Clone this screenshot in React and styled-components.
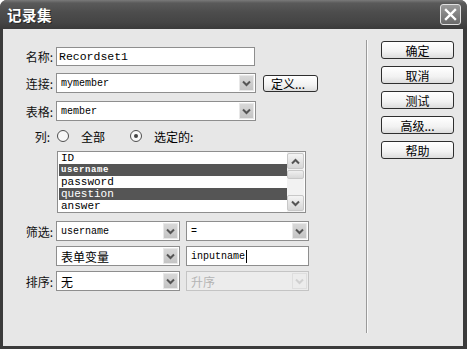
import React from "react";
import styled, { createGlobalStyle } from "styled-components";

const GlobalStyle = createGlobalStyle`
  html, body {
    margin: 0;
    padding: 0;
    background: #ffffff;
    overflow: hidden;
  }
  body {
    font-family: "Noto Sans CJK SC", "Liberation Sans", sans-serif;
    font-size: 12px;
    color: #000;
  }
`;

const cjk = `"Noto Sans CJK SC", "Liberation Sans", sans-serif`;
const mono = `"Liberation Mono", "Noto Sans CJK SC", monospace`;

const Window = styled.div`
  width: 467px;
  height: 349px;
  display: flex;
  flex-direction: column;
  border-radius: 7px 7px 0 0;
  overflow: hidden;
  background: #3b3b3b;
`;

const TitleBar = styled.div`
  height: 29px;
  flex: none;
  display: flex;
  align-items: center;
  justify-content: space-between;
  padding: 0 6px 0 7px;
  background: linear-gradient(
    to bottom,
    #7a7a7a 0px,
    #5a5a5a 3px,
    #4d4d4d 12px,
    #454545 22px,
    #3a3a3a 29px
  );
`;

const Title = styled.div`
  color: #fff;
  font-family: ${cjk};
  font-weight: 700;
  font-size: 14.5px;
  letter-spacing: 0.5px;
  text-shadow: 1px 1px 0 #222;
`;

const CloseButton = styled.div`
  width: 19px;
  height: 19px;
  border: 1px solid #e0e0e0;
  border-radius: 3px;
  background: linear-gradient(to bottom, #9a9a9a, #6a6a6a);
  display: flex;
  align-items: center;
  justify-content: center;
`;

const Frame = styled.div`
  flex: 1;
  display: flex;
  padding: 0 4px 3px 3px;
`;

const Body = styled.div`
  flex: 1;
  display: flex;
  background: #e7e7e7;
`;

const Form = styled.div`
  width: 363px;
  display: flex;
  flex-direction: column;
`;

const Row = styled.div`
  display: flex;
  align-items: center;
  height: ${(p) => p.$h}px;
  margin-top: ${(p) => p.$top}px;
`;

const Label = styled.div`
  width: ${(p) => (p.$w ? p.$w : 50)}px;
  padding-right: ${(p) => (p.$pr !== undefined ? p.$pr : 3)}px;
  text-align: right;
  font-family: ${cjk};
  font-size: 12px;
  color: #111;
  flex: none;
`;

const TextInput = styled.div`
  box-sizing: border-box;
  width: ${(p) => p.$w}px;
  height: 100%;
  background: #fff;
  border: 1px solid #8e8e8e;
  display: flex;
  align-items: center;
  padding-left: ${(p) => (p.$big ? 2 : 4)}px;
  font-family: ${mono};
  font-size: ${(p) => (p.$big ? 11.5 : 10)}px;
  color: #000;
  margin-left: ${(p) => p.$ml || 0}px;
`;

const Caret = styled.span`
  display: inline-block;
  width: 1px;
  height: 13px;
  background: #000;
  margin-left: 1px;
`;

const SelectBox = styled.div`
  box-sizing: border-box;
  width: ${(p) => p.$w}px;
  height: 100%;
  margin-left: ${(p) => p.$ml || 0}px;
  background: ${(p) => (p.$disabled ? "#ececec" : "#fff")};
  border: 1px solid ${(p) => (p.$disabled ? "#c4c4c4" : "#8e8e8e")};
  display: flex;
  align-items: center;
  padding: 1px;
`;

const SelectValue = styled.div`
  flex: 1;
  padding-left: 3px;
  font-family: ${(p) => (p.$cjk ? cjk : mono)};
  font-size: ${(p) => (p.$cjk ? 12 : 10)}px;
  color: ${(p) => (p.$disabled ? "#b4b4b4" : "#000")};
  white-space: nowrap;
`;

const ArrowButton = styled.div`
  box-sizing: border-box;
  width: 15px;
  height: 100%;
  background: ${(p) =>
    p.$disabled ? "#ececec" : "linear-gradient(to bottom, #d8d8d8, #c4c4c4)"};
  border: 1px solid ${(p) => (p.$disabled ? "#dedede" : "#e8e8e8")};
  display: flex;
  align-items: center;
  justify-content: center;
`;

const PushButton = styled.div`
  box-sizing: border-box;
  width: ${(p) => p.$w}px;
  height: ${(p) => p.$h}px;
  margin-left: ${(p) => p.$ml || 0}px;
  border: 1px solid #2e2e2e;
  border-radius: 3px;
  background: linear-gradient(to bottom, #ffffff, #f2f2f2 60%, #dcdcdc);
  display: flex;
  align-items: center;
  justify-content: ${(p) => (p.$left ? "flex-start" : "center")};
  padding-left: ${(p) => (p.$left ? 7 : 0)}px;
  font-family: ${cjk};
  font-size: 12px;
  color: #000;
  flex: none;
`;

const RadioWrap = styled.div`
  display: flex;
  align-items: center;
  margin-left: ${(p) => p.$ml || 0}px;
  gap: ${(p) => p.$gap}px;
  font-family: ${cjk};
  font-size: 12px;
`;

const RadioCircle = styled.div`
  box-sizing: border-box;
  width: 12px;
  height: 12px;
  border-radius: 50%;
  border: 1px solid #4e4e4e;
  background: #f8f8f8;
  display: flex;
  align-items: center;
  justify-content: center;
  &::after {
    content: "";
    display: ${(p) => (p.$on ? "block" : "none")};
    width: 4px;
    height: 4px;
    border-radius: 50%;
    background: #444;
  }
`;

const ListBox = styled.div`
  box-sizing: border-box;
  width: 249px;
  height: 100%;
  margin-left: 1px;
  background: #fff;
  border: 1px solid #8e8e8e;
  display: flex;
  padding: 0 1px 0 1px;
`;

const ListItems = styled.div`
  flex: 1;
  display: flex;
  flex-direction: column;
`;

const ListItem = styled.div`
  height: 12px;
  line-height: 12px;
  padding-left: 2px;
  font-family: ${mono};
  font-size: ${(p) => (p.$small ? 9 : 11)}px;
  font-weight: ${(p) => (p.$small ? 700 : 400)};
  letter-spacing: ${(p) => (p.$small ? 0.6 : 0)}px;
  background: ${(p) => (p.$sel ? "#555555" : "transparent")};
  color: ${(p) => (p.$sel ? "#fff" : "#000")};
`;

const ScrollBar = styled.div`
  width: 17px;
  display: flex;
  flex-direction: column;
  background: #f2f2f2;
  padding: 1px 0;
`;

const ScrollBtn = styled.div`
  box-sizing: border-box;
  height: 16px;
  border: 1px solid #c8c8c8;
  border-radius: 2px;
  background: linear-gradient(to bottom, #f4f4f4, #d6d6d6);
  display: flex;
  align-items: center;
  justify-content: center;
`;

const Thumb = styled.div`
  box-sizing: border-box;
  height: 9px;
  margin-top: 1px;
  border: 1px solid #c8c8c8;
  border-radius: 2px;
  background: linear-gradient(to bottom, #f0f0f0, #d8d8d8);
`;

const Track = styled.div`
  flex: 1;
`;

const Separator = styled.div`
  width: 1px;
  margin: 11px 0 13px;
  background: #9a9a9a;
  border-right: 1px solid #fafafa;
`;

const ButtonColumn = styled.div`
  display: flex;
  flex-direction: column;
  gap: 7px;
  padding: 12px 0 0 13px;
`;

function Chevron({ up, color = "#555" }) {
  return (
    <svg width="9" height="7" viewBox="0 0 9 7">
      <path
        d={up ? "M1 5.5 L4.5 2 L8 5.5" : "M1 1.5 L4.5 5 L8 1.5"}
        fill="none"
        stroke={color}
        strokeWidth="2"
      />
    </svg>
  );
}

function Select({ w, ml, value, isCjk, disabled }) {
  return (
    <SelectBox $w={w} $ml={ml} $disabled={disabled}>
      <SelectValue $cjk={isCjk} $disabled={disabled}>
        {value}
      </SelectValue>
      <ArrowButton $disabled={disabled}>
        <Chevron color={disabled ? "#d0d0d0" : "#555"} />
      </ArrowButton>
    </SelectBox>
  );
}

const columns = [
  { name: "ID" },
  { name: "username", sel: true, small: true },
  { name: "password" },
  { name: "question", sel: true },
  { name: "answer" },
];

export default function App() {
  return (
    <>
      <GlobalStyle />
      <Window>
        <TitleBar>
          <Title>记录集</Title>
          <CloseButton>
            <svg width="13" height="13" viewBox="0 0 13 13">
              <path
                d="M2 2 L11 11 M11 2 L2 11"
                stroke="#fff"
                strokeWidth="2.4"
                strokeLinecap="square"
              />
            </svg>
          </CloseButton>
        </TitleBar>
        <Frame>
          <Body>
            <Form>
              <Row $h={19} $top={18}>
                <Label>名称:</Label>
                <TextInput $w={199} $big>
                  Recordset1
                </TextInput>
              </Row>
              <Row $h={20} $top={7}>
                <Label>连接:</Label>
                <Select w={200} value="mymember" />
                <PushButton $w={55} $h={17} $ml={7} $left>
                  定义...
                </PushButton>
              </Row>
              <Row $h={20} $top={8}>
                <Label>表格:</Label>
                <Select w={200} value="member" />
              </Row>
              <Row $h={16} $top={7}>
                <Label $w={47} $pr={0}>
                  列:
                </Label>
                <RadioWrap $ml={7} $gap={12}>
                  <RadioCircle />
                  <span>全部</span>
                </RadioWrap>
                <RadioWrap $ml={25} $gap={12}>
                  <RadioCircle $on />
                  <span>选定的:</span>
                </RadioWrap>
              </Row>
              <Row $h={62} $top={7}>
                <Label />
                <ListBox>
                  <ListItems>
                    {columns.map((c) => (
                      <ListItem key={c.name} $sel={c.sel} $small={c.small}>
                        {c.name}
                      </ListItem>
                    ))}
                  </ListItems>
                  <ScrollBar>
                    <ScrollBtn>
                      <Chevron up />
                    </ScrollBtn>
                    <Thumb />
                    <Track />
                    <ScrollBtn>
                      <Chevron />
                    </ScrollBtn>
                  </ScrollBar>
                </ListBox>
              </Row>
              <Row $h={20} $top={8}>
                <Label>筛选:</Label>
                <Select w={124} value="username" />
                <Select w={123} ml={6} value="=" />
              </Row>
              <Row $h={20} $top={5}>
                <Label />
                <Select w={124} value="表单变量" isCjk />
                <TextInput $w={123} $ml={6}>
                  inputname
                  <Caret />
                </TextInput>
              </Row>
              <Row $h={20} $top={5}>
                <Label>排序:</Label>
                <Select w={124} value="无" isCjk />
                <Select w={123} ml={6} value="升序" isCjk disabled />
              </Row>
            </Form>
            <Separator />
            <ButtonColumn>
              {["确定", "取消", "测试", "高级...", "帮助"].map((t) => (
                <PushButton key={t} $w={73} $h={18}>
                  {t}
                </PushButton>
              ))}
            </ButtonColumn>
          </Body>
        </Frame>
      </Window>
    </>
  );
}
